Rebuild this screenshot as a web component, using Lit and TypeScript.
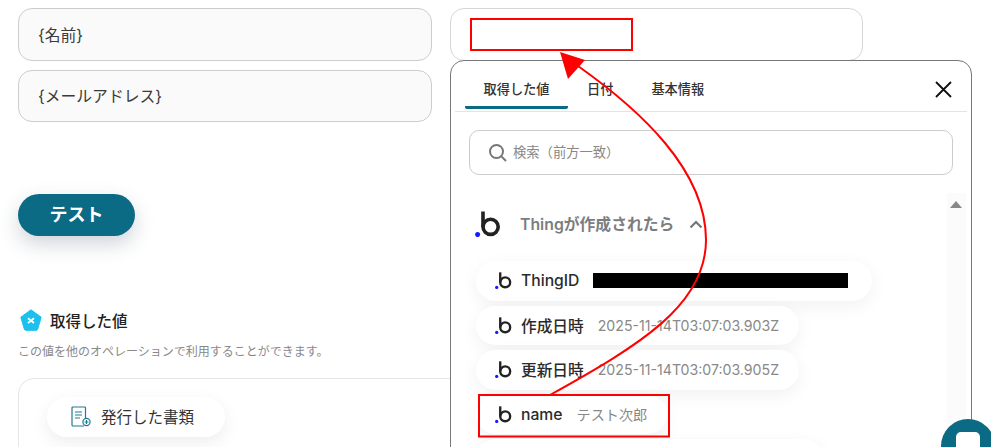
import { LitElement, html, css, svg } from "lit";
import { customElement } from "lit/decorators.js";

const bubbleLogo = (size: number) => html`
  <svg class="logo" width=${size} height=${size} viewBox="0 0 26 26">
    <circle cx="15.6" cy="15.8" r="7.6" fill="none" stroke="#222" stroke-width="3.6" />
    <path d="M8 0.5V16" stroke="#222" stroke-width="3.6" fill="none" />
    <circle cx="2.6" cy="23.6" r="2.5" fill="#1a1aff" />
  </svg>
`;

const values = [
  { name: "作成日時", value: "2025-11-14T03:07:03.903Z" },
  { name: "更新日時", value: "2025-11-14T03:07:03.905Z" },
  { name: "name", value: "テスト次郎" },
];

@customElement("app-root")
export class AppRoot extends LitElement {
  static styles = css`
    :host {
      display: block;
      position: relative;
      width: 991px;
      height: 447px;
      overflow: hidden;
      background: #fff;
      font-family: Inter, "Noto Sans CJK JP", sans-serif;
      color: #333;
    }
    .page {
      padding: 8px 18px 0;
    }
    .fields {
      display: grid;
      grid-template-columns: 414px 413px;
      column-gap: 18px;
      row-gap: 9px;
    }
    .field {
      box-sizing: border-box;
      height: 52.5px;
      padding: 0 20px 0 19px;
      display: flex;
      align-items: center;
      border: 1px solid #ccc;
      border-radius: 14px;
      background: #fafafa;
      font-size: 15.8px;
      color: #3a3a3a;
    }
    .field.empty {
      background: #fff;
      border-color: #d4d6da;
    }
    .test {
      display: block;
      margin-top: 72px;
      width: 117px;
      height: 42px;
      padding: 0 0 4px;
      border: none;
      border-radius: 21px;
      background: #0b6a84;
      color: #fff;
      font: 700 18px Inter, "Noto Sans CJK JP", sans-serif;
      box-shadow: 0 8px 20px rgba(40, 60, 80, 0.22);
    }
    .values-title {
      margin-top: 73px;
      display: flex;
      align-items: center;
      gap: 8px;
      margin-left: 2px;
      height: 22px;
      font-size: 15.5px;
      font-weight: 500;
      color: #222;
    }
    .hint {
      margin-top: 11px;
      font-size: 12px;
      color: #888;
    }
    .box {
      margin-top: 19px;
      height: 120px;
      width: 500px;
      box-sizing: border-box;
      padding: 18px 28px;
      border: 1px solid #e6e6e6;
      border-radius: 16px 0 0 0;
    }
    .doc-pill {
      display: inline-flex;
      align-items: center;
      gap: 10px;
      height: 40px;
      padding: 0 31px 2px 24px;
      box-sizing: border-box;
      border-radius: 20px;
      background: #fff;
      font-size: 15.5px;
      color: #333;
      box-shadow: 0 6px 18px rgba(0, 0, 0, 0.07);
    }

    .panel {
      position: absolute;
      left: 450px;
      top: 60px;
      box-sizing: border-box;
      width: 522px;
      height: 420px;
      background: #fff;
      border: 1px solid #777;
      border-radius: 14px;
    }
    .tabs {
      position: relative;
      display: flex;
      height: 50px;
      margin: 0 4px;
      padding-left: 10px;
      border-bottom: 1px solid #e4e4e4;
    }
    .tab {
      display: flex;
      align-items: center;
      justify-content: center;
      box-sizing: border-box;
      height: 48px;
      padding: 10px 19px 0;
      border-bottom: 3px solid transparent;
      font-size: 13.2px;
      font-weight: 500;
      white-space: nowrap;
      color: #333;
    }
    .tab.active {
      width: 103px;
      padding-left: 0;
      padding-right: 0;
      border-bottom-color: #0b6a84;
      border-radius: 0 0 2px 2px;
    }
    .close {
      position: absolute;
      right: 14px;
      top: 18px;
    }
    .search {
      box-sizing: border-box;
      height: 45px;
      margin: 18px 18px 0;
      padding: 0 0 2px 18px;
      display: flex;
      align-items: center;
      gap: 5px;
      border: 1px solid #ccc;
      border-radius: 10px;
      font-size: 13.3px;
      color: #888;
    }
    .search svg {
      margin-top: 2px;
    }
    .group-head {
      margin: 36px 0 0 24px;
      height: 26px;
      display: flex;
      align-items: center;
      gap: 19px;
      font-size: 15.8px;
      font-weight: 600;
      line-height: 24px;
      color: #7d7d7d;
    }
    .group-head span {
      margin-top: 1px;
    }
    .group-head svg.chevron {
      margin-left: -4px;
    }
    .list {
      margin: 24px 0 0 25px;
      display: flex;
      flex-direction: column;
      align-items: flex-start;
      gap: 5px;
    }
    .pill {
      box-sizing: border-box;
      height: 39.5px;
      display: flex;
      align-items: center;
      padding: 0 20px 0 19px;
      border-radius: 20px;
      background: #fff;
      box-shadow: 0 5px 18px rgba(0, 0, 0, 0.06);
      font-size: 15.7px;
      font-weight: 500;
      color: #2b2b2b;
    }
    .pill .logo {
      margin-right: 9px;
    }
    .pill .val {
      margin-left: 14px;
      font-size: 14.15px;
      font-weight: 400;
      color: #888;
    }
    .redacted {
      width: 255px;
      height: 15px;
      margin-left: 14px;
      background: #000;
    }
    .pill.first {
      width: 396px;
    }
    .pill.stub {
      width: 347px;
    }
    .track {
      position: absolute;
      right: 5px;
      top: 132px;
      width: 19px;
      height: 290px;
      background: #fbfbfb;
    }
    .track::before {
      content: "";
      position: absolute;
      left: 3px;
      top: 8px;
      border: 6.5px solid transparent;
      border-top: 0;
      border-bottom: 7px solid #888;
    }
    .chat {
      position: absolute;
      left: 941px;
      top: 419px;
      width: 54px;
      height: 54px;
      border-radius: 50%;
      background: #0b6a84;
      display: flex;
      justify-content: center;
      padding-top: 13px;
      box-sizing: border-box;
    }
    .chat span {
      width: 24px;
      height: 24px;
      background: #fff;
      border-radius: 5px;
    }
    .markup {
      position: absolute;
      left: 0;
      top: 0;
    }
  `;

  render() {
    return html`
      <div class="page">
        <div class="fields">
          <div class="field">{名前}</div>
          <div class="field empty"></div>
          <div class="field">{メールアドレス}</div>
        </div>
        <button class="test">テスト</button>
        <div class="values-title">
          <svg width="22" height="22" viewBox="0 0 22 22">
            <path
              d="M11 .8 21.2 8.2 17.6 20.4a1.5 1.5 0 0 1-1.2.9H5.6a1.5 1.5 0 0 1-1.2-.9L.8 8.2Z"
              fill="#1bc0ef"
              stroke="#1bc0ef"
              stroke-linejoin="round"
            />
            <path d="M8 9.2l6 4.8M14 9.2l-6 4.8" stroke="#fff" stroke-width="1.8" />
          </svg>
          取得した値
        </div>
        <div class="hint">この値を他のオペレーションで利用することができます。</div>
        <div class="box">
          <div class="doc-pill">
            <svg width="20" height="21" viewBox="0 0 20 21" fill="none" stroke="#1f7c96" stroke-width="1.2">
              <path d="M14.5 12V2a1 1 0 0 0-1-1H2a1 1 0 0 0-1 1v17a1 1 0 0 0 1 1h11" />
              <path d="M4 6h7M4 9h7M4 12h5" />
              <circle cx="15.5" cy="16" r="3.6" />
              <path d="M15.5 14v4M13.5 16h4" />
            </svg>
            発行した書類
          </div>
        </div>
      </div>

      <div class="panel">
        <div class="tabs">
          <div class="tab active">取得した値</div>
          <div class="tab">日付</div>
          <div class="tab">基本情報</div>
          <svg class="close" width="20" height="20" viewBox="0 0 20 20">
            <path d="M3 3l15 15M18 3 3 18" stroke="#111" stroke-width="1.8" fill="none" />
          </svg>
        </div>
        <div class="search">
          <svg width="20" height="20" viewBox="0 0 20 20" fill="none" stroke="#777" stroke-width="2">
            <circle cx="8.5" cy="8.5" r="6.5" />
            <path d="M13.4 13.4 18 18" />
          </svg>
          検索（前方一致）
        </div>
        <div class="group-head">
          ${bubbleLogo(26)}
          <span>Thingが作成されたら</span>
          <svg class="chevron" width="14" height="9" viewBox="0 0 14 9">
            <path d="M1.5 7.5 7 2l5.5 5.5" fill="none" stroke="#777" stroke-width="2.2" />
          </svg>
        </div>
        <div class="list">
          <div class="pill first">${bubbleLogo(17)}ThingID<span class="redacted"></span></div>
          ${values.map(
            (v) => html`<div class="pill">${bubbleLogo(17)}${v.name}<span class="val">${v.value}</span></div>`
          )}
          <div class="pill stub"></div>
        </div>
        <div class="track"></div>
      </div>

      <div class="chat"><span></span></div>

      <svg class="markup" width="991" height="447" fill="none">
        ${svg`
          <rect x="471" y="19" width="161" height="31" stroke="#f00" stroke-width="2" />
          <rect x="479" y="395" width="190" height="41.5" stroke="#f00" stroke-width="2" />
          <path d="M550 395C640 345 706 305 706 240C706 170 640 110 578 66" stroke="#f00" stroke-width="2" />
          <path d="M560 52 585 60 568 79Z" fill="#f00" />
        `}
      </svg>
    `;
  }
}
